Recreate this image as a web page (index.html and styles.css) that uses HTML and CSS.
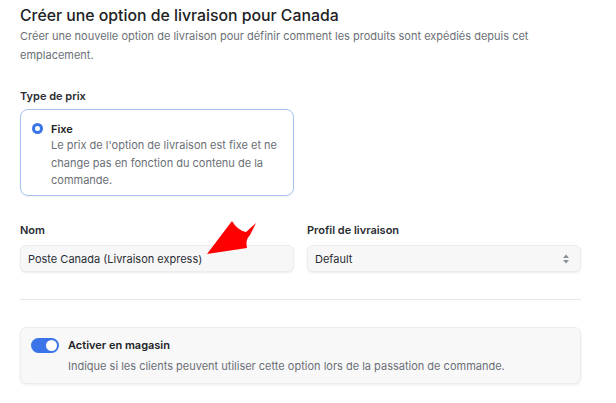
FILE: index.html
```html
<!DOCTYPE html>
<html lang="fr">
<head>
<meta charset="utf-8">
<link rel="stylesheet" href="styles.css">
</head>
<body>
<div class="page">
  <header class="head">
    <h1 class="title">Créer une option de livraison pour Canada</h1>
    <p class="subtitle">Créer une nouvelle option de livraison pour définir comment les produits sont expédiés depuis cet emplacement.</p>
  </header>

  <section class="price">
    <div class="label">Type de prix</div>
    <div class="card-radio">
      <span class="radio"></span>
      <div class="radio-text">
        <div class="radio-title">Fixe</div>
        <div class="radio-desc">Le prix de l'option de livraison est fixe et ne change pas en fonction du contenu de la commande.</div>
      </div>
    </div>
  </section>

  <section class="fields">
    <div class="field">
      <div class="label">Nom</div>
      <div class="input">Poste Canada (Livraison express)</div>
    </div>
    <div class="field">
      <div class="label">Profil de livraison</div>
      <div class="input select">
        <span>Default</span>
        <svg class="chev" width="8" height="12" viewBox="0 0 8 12"><path d="M4 1.5 L7 5 H1 Z M4 10.5 L7 7 H1 Z" fill="#8a8f98"/></svg>
      </div>
    </div>
  </section>

  <hr class="divider">

  <section class="switch-card">
    <span class="toggle"><span class="knob"></span></span>
    <div class="switch-text">
      <div class="switch-title">Activer en magasin</div>
      <div class="switch-desc">Indique si les clients peuvent utiliser cette option lors de la passation de commande.</div>
    </div>
  </section>

  <svg class="arrow" width="616" height="403" viewBox="0 0 616 403">
    <path d="M207 254 L232 221 Q237 230 246 232 L256 223 L250 235 Q245 240 247 248 Z" fill="#ff0000"/>
  </svg>
</div>
</body>
</html>
```

FILE: styles.css
```css
* { box-sizing: border-box; }
html, body { margin: 0; padding: 0; background: #ffffff; }
body {
  font-family: Inter, "Noto Sans", sans-serif;
  color: #1f2328;
  width: 616px;
  height: 403px;
  overflow: hidden;
}
.page {
  position: relative;
  padding: 5px 36px 0 20px;
}
.title {
  margin: 0;
  font-size: 15.8px;
  font-weight: 500;
  line-height: 22px;
  color: #202124;
}
.subtitle {
  margin: 0;
  font-size: 11px;
  line-height: 19px;
  color: #6b6f76;
  max-width: 540px;
}
.price { margin-top: 24px; }
.label {
  font-size: 11px;
  font-weight: 600;
  color: #2a2d33;
  line-height: 14px;
}
.card-radio {
  margin-top: 6px;
  width: 274px;
  height: 87px;
  border: 1.5px solid #a9c1f2;
  border-radius: 8px;
  padding: 12px 12px 0 11px;
  display: flex;
  gap: 8px;
  box-shadow: 0 1px 2px rgba(0,0,0,0.06);
}
.radio {
  flex: none;
  width: 11px;
  height: 11px;
  margin-top: 1px;
  border-radius: 50%;
  border: 3.5px solid #3b74e8;
  background: #fff;
}
.radio-title {
  font-size: 11px;
  font-weight: 600;
  color: #202124;
  line-height: 14px;
}
.radio-desc {
  font-size: 11px;
  color: #6b6f76;
  line-height: 17.5px;
  margin-top: 1px;
}
.fields {
  margin-top: 27px;
  display: grid;
  grid-template-columns: 274px 274px;
  column-gap: 13px;
}
.field .label { margin-bottom: 8px; }
.input {
  height: 27px;
  background: #f7f7f8;
  border: 1px solid #ececee;
  border-radius: 6px;
  box-shadow: 0 1px 2px rgba(0,0,0,0.08);
  font-size: 11px;
  color: #2a2d33;
  padding: 0 7px;
  display: flex;
  align-items: center;
}
.select { justify-content: space-between; padding-right: 10px; }
.divider {
  margin: 27px 0 0;
  border: 0;
  border-top: 1px solid #e6e7ea;
  width: 561px;
}
.switch-card {
  margin-top: 27px;
  width: 561px;
  height: 57px;
  background: #f8f8f9;
  border: 1px solid #ececee;
  border-radius: 7px;
  box-shadow: 0 1px 3px rgba(0,0,0,0.08);
  display: flex;
  gap: 9px;
  padding: 10px 10px 0 10px;
}
.toggle {
  flex: none;
  width: 28px;
  height: 15px;
  border-radius: 8px;
  background: #3b74e8;
  position: relative;
}
.knob {
  position: absolute;
  right: 2px;
  top: 2px;
  width: 11px;
  height: 11px;
  border-radius: 50%;
  background: #fff;
}
.switch-title {
  font-size: 11px;
  font-weight: 600;
  color: #202124;
  line-height: 14px;
}
.switch-desc {
  margin-top: 7px;
  font-size: 11px;
  color: #6b6f76;
  line-height: 14px;
}
.arrow {
  position: absolute;
  left: 0;
  top: 0;
  pointer-events: none;
}
```
